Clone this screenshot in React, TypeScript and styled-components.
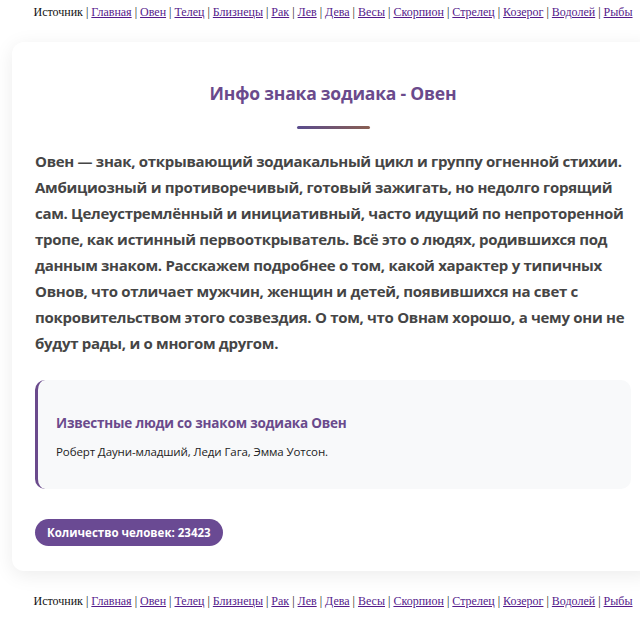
import React from "react";
import styled, { createGlobalStyle } from "styled-components";

const GlobalStyle = createGlobalStyle`
  html, body {
    margin: 0;
    padding: 0;
    background: #ffffff;
    overflow: hidden;
  }
`;

const Page = styled.div`
  width: 666px;
`;

const Nav = styled.div<{ bottom?: boolean }>`
  font-family: "Liberation Serif", "Times New Roman", serif;
  font-size: 12px;
  line-height: 15px;
  color: #111;
  text-align: center;
  white-space: nowrap;
  padding: ${(p) => (p.bottom ? "23px 0 20px" : "5px 0 0")};
`;

const NavLink = styled.a`
  color: #551a8b;
  text-decoration: underline;
`;

const Card = styled.div`
  margin: 22px 12px 0;
  background: #ffffff;
  border-radius: 12px;
  box-shadow: 0 4px 20px rgba(0, 0, 0, 0.08);
  padding: 40px 23px 25px;
  font-family: "Open Sans", "Noto Sans", sans-serif;
`;

const Title = styled.h1`
  margin: 0;
  text-align: center;
  font-size: 17.5px;
  line-height: 22px;
  font-weight: 700;
  letter-spacing: -0.2px;
  color: #6a4a8c;
`;

const Divider = styled.div`
  width: 73px;
  height: 3px;
  margin: 22px auto 19px;
  border-radius: 2px;
  background: linear-gradient(to right, #5a4c8e, #8a5f52);
`;

const Lead = styled.p`
  margin: 0;
  font-size: 15px;
  line-height: 26px;
  font-weight: 700;
  letter-spacing: -0.3px;
  color: #454545;
`;

const Quote = styled.div`
  margin-top: 24px;
  background: #f8f9fa;
  border-left: 3px solid #6a4a8c;
  border-radius: 10px;
  padding: 33px 18px 28px;
`;

const QuoteTitle = styled.h3`
  margin: 0 0 10px;
  font-size: 13.5px;
  line-height: 20px;
  font-weight: 700;
  letter-spacing: -0.2px;
  color: #6a4a8c;
`;

const QuoteText = styled.p`
  margin: 0;
  font-size: 11.5px;
  line-height: 18px;
  letter-spacing: -0.1px;
  color: #222;
`;

const Badge = styled.span`
  display: inline-block;
  margin-top: 30px;
  background: #6a4a93;
  color: #fff;
  font-size: 11.5px;
  font-weight: 700;
  line-height: 27px;
  padding: 0 12px;
  border-radius: 14px;
`;

const signs = [
  "Главная",
  "Овен",
  "Телец",
  "Близнецы",
  "Рак",
  "Лев",
  "Дева",
  "Весы",
  "Скорпион",
  "Стрелец",
  "Козерог",
  "Водолей",
  "Рыбы",
];

const NavBar: React.FC<{ bottom?: boolean }> = ({ bottom }) => (
  <Nav bottom={bottom}>
    Источник
    {signs.map((s) => (
      <React.Fragment key={s}>
        {" | "}
        <NavLink href="#">{s}</NavLink>
      </React.Fragment>
    ))}
  </Nav>
);

export default function App() {
  return (
    <Page>
      <GlobalStyle />
      <NavBar />
      <Card>
        <Title>Инфо знака зодиака - Овен</Title>
        <Divider />
        <Lead>
          Овен — знак, открывающий зодиакальный цикл и группу огненной стихии.
          Амбициозный и противоречивый, готовый зажигать, но недолго горящий
          сам. Целеустремлённый и инициативный, часто идущий по непроторенной
          тропе, как истинный первооткрыватель. Всё это о людях, родившихся под
          данным знаком. Расскажем подробнее о том, какой характер у типичных
          Овнов, что отличает мужчин, женщин и детей, появившихся на свет с
          покровительством этого созвездия. О том, что Овнам хорошо, а чему они
          не будут рады, и о многом другом.
        </Lead>
        <Quote>
          <QuoteTitle>Известные люди со знаком зодиака Овен</QuoteTitle>
          <QuoteText>Роберт Дауни-младший, Леди Гага, Эмма Уотсон.</QuoteText>
        </Quote>
        <Badge>Количество человек: 23423</Badge>
      </Card>
      <NavBar bottom />
    </Page>
  );
}
